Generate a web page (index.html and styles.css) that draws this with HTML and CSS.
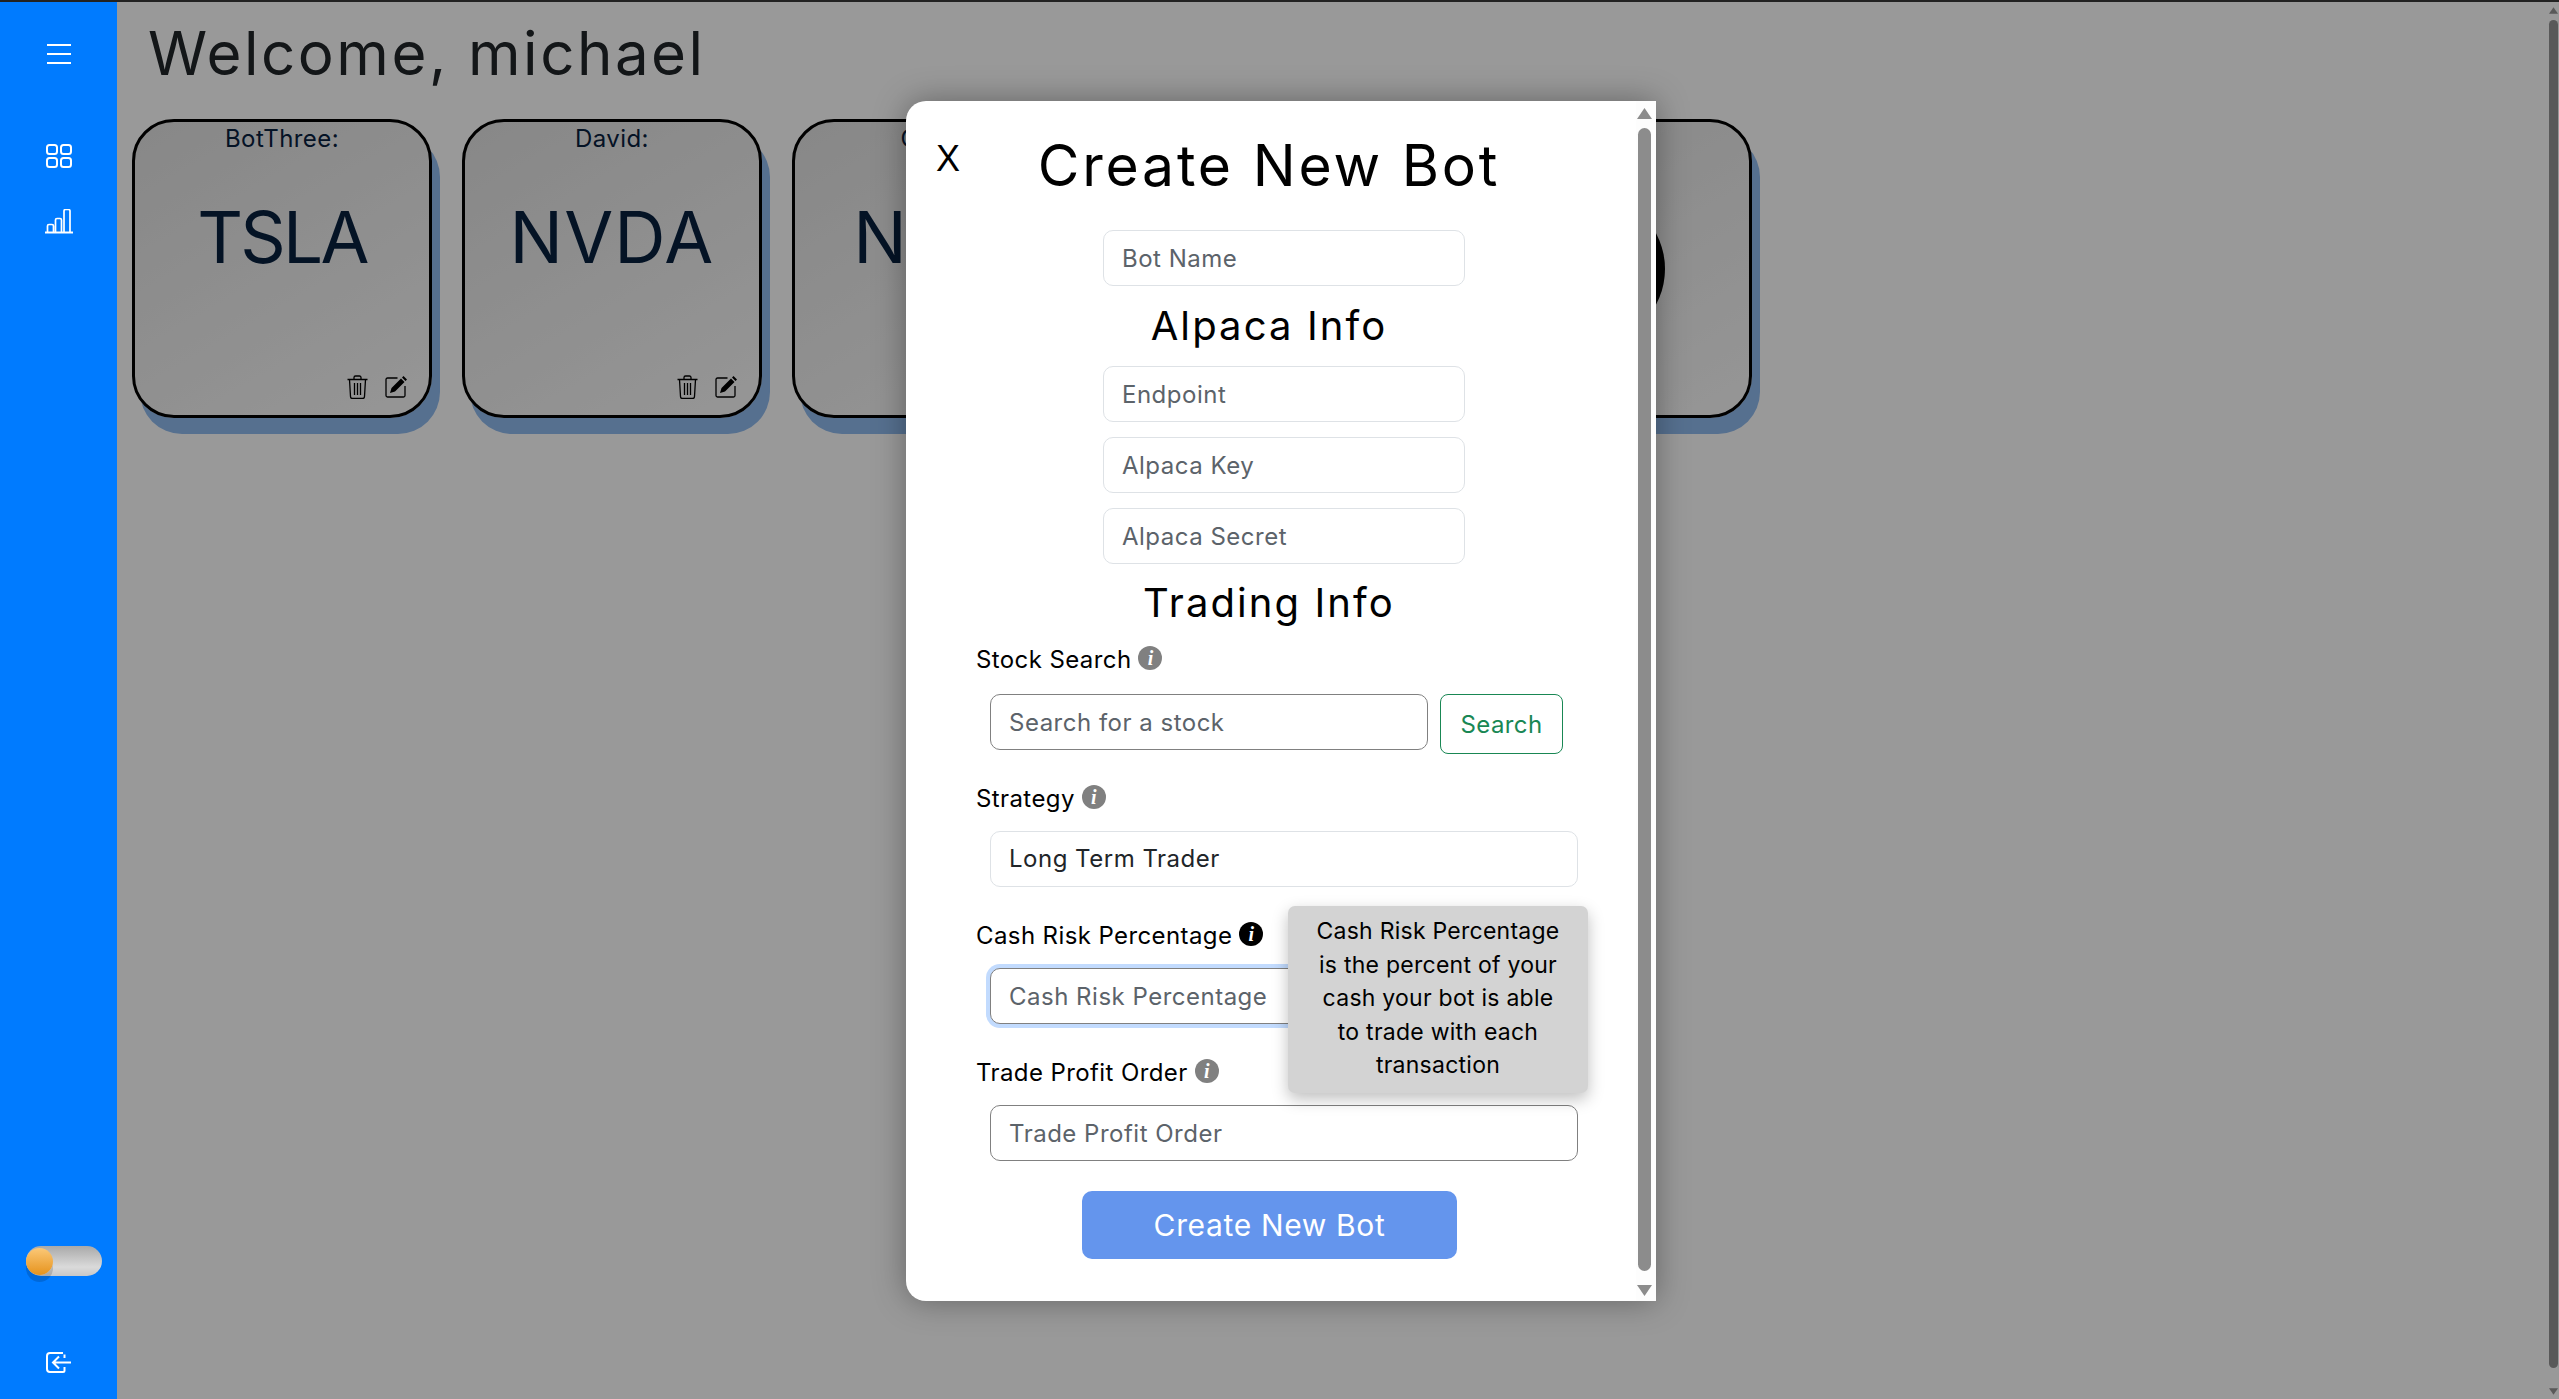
FILE: index.html
```html
<!DOCTYPE html>
<html lang="en">
<head>
<meta charset="utf-8">
<title>Dashboard</title>
<link rel="stylesheet" href="styles.css">
</head>
<body>
<div class="topline"></div>
<div class="app">
  <aside class="sidebar">
    <svg class="ico ico-menu" viewBox="0 0 26 20"><path d="M1 1h24M1 10h24M1 19h24"/></svg>
    <svg class="ico ico-grid" viewBox="0 0 26 24"><rect x="1" y="1" width="10" height="9" rx="2.5"/><rect x="15" y="1" width="10" height="9" rx="2.5"/><rect x="1" y="14" width="10" height="9" rx="2.5"/><rect x="15" y="14" width="10" height="9" rx="2.5"/></svg>
    <svg class="ico ico-chart" viewBox="0 0 28 25"><path d="M0 23.500h28"/><path class="thin" d="M2.500 23.500v-6.500a1.500 1.500 0 0 1 1.500-1.500h3a1.500 1.500 0 0 1 1.500 1.500v6.500M10.500 23.500v-12.500a1.500 1.500 0 0 1 1.500-1.500h3a1.500 1.500 0 0 1 1.500 1.500v12.500M19 23.500v-21.500a1.500 1.500 0 0 1 1.500-1.500h3a1.500 1.500 0 0 1 1.500 1.500v21.500"/></svg>
    <div class="spacer"></div>
    <div class="toggle"><span class="knob"></span></div>
    <svg class="ico ico-exit" viewBox="0 0 26 21"><path d="M17 1H4a3 3 0 0 0-3 3v13a3 3 0 0 0 3 3h13a1.500 1.500 0 0 0 1.500-1.500V15M18.500 6V2.500M25 10.500H7M13 4.500l-6 6 6 6"/></svg>
  </aside>
  <main class="main">
    <h1 class="welcome">Welcome, michael</h1>
    <div class="cards">
      <article class="card">
        <div class="card-name">BotThree:</div>
        <div class="card-ticker tight">TSLA</div>
        <div class="card-actions">
          <svg class="act act-trash" viewBox="0 0 21 24"><path d="M0.500 4.500h20M7 4.500V2.500a1.500 1.500 0 0 1 1.500-1.500h4a1.500 1.500 0 0 1 1.500 1.500v2M2.500 4.500l1 17a2 2 0 0 0 2 2h10a2 2 0 0 0 2-2l1-17M7.500 8v12M10.500 8v12M13.500 8v12"/></svg>
          <svg class="act act-edit" viewBox="0 0 22 22"><path class="line" d="M12.500 2H2.500a1.500 1.500 0 0 0-1.500 1.500v16a1.500 1.500 0 0 0 1.500 1.500h16a1.500 1.500 0 0 0 1.500-1.500V10"/><path class="fill" d="M5 17l1.500-5L16 2.500l3.500 3.500L10 15.500zM17 1.500l1.500-1.500 3.500 3.500-1.500 1.500z"/></svg>
        </div>
      </article>
      <article class="card">
        <div class="card-name">David:</div>
        <div class="card-ticker wide">NVDA</div>
        <div class="card-actions">
          <svg class="act act-trash" viewBox="0 0 21 24"><path d="M0.500 4.500h20M7 4.500V2.500a1.500 1.500 0 0 1 1.500-1.500h4a1.500 1.500 0 0 1 1.500 1.500v2M2.500 4.500l1 17a2 2 0 0 0 2 2h10a2 2 0 0 0 2-2l1-17M7.500 8v12M10.500 8v12M13.500 8v12"/></svg>
          <svg class="act act-edit" viewBox="0 0 22 22"><path class="line" d="M12.500 2H2.500a1.500 1.500 0 0 0-1.500 1.500v16a1.500 1.500 0 0 0 1.500 1.500h16a1.500 1.500 0 0 0 1.500-1.500V10"/><path class="fill" d="M5 17l1.500-5L16 2.500l3.500 3.500L10 15.500zM17 1.500l1.500-1.500 3.500 3.500-1.500 1.500z"/></svg>
        </div>
      </article>
      <article class="card">
        <div class="card-name">Carlos:</div>
        <div class="card-ticker">NOW</div>
      </article>
      <article class="card"></article>
      <article class="card"><span class="blob"></span></article>
    </div>
  </main>
</div>

<div class="overlay"></div>
<div class="page-scroll">
  <svg class="arrow" viewBox="0 0 10 7"><path d="M5 0l5 7H0z"/></svg>
  <div class="page-thumb"></div>
  <svg class="arrow" viewBox="0 0 10 7"><path d="M0 0h10L5 7z"/></svg>
</div>

<section class="modal">
  <button class="close">X</button>
  <div class="modal-scroll">
    <svg class="arrow" viewBox="0 0 15 11"><path d="M7.500 0l7.500 11H0z"/></svg>
    <div class="modal-thumb"></div>
    <svg class="arrow" viewBox="0 0 15 11"><path d="M0 0h15L7.500 11z"/></svg>
  </div>
  <div class="modal-body">
    <h2 class="modal-title">Create New Bot</h2>
    <input class="field field-short" placeholder="Bot Name">
    <h3 class="section section-alpaca">Alpaca Info</h3>
    <div class="short-stack">
      <input class="field field-short" placeholder="Endpoint">
      <input class="field field-short" placeholder="Alpaca Key">
      <input class="field field-short" placeholder="Alpaca Secret">
    </div>
    <h3 class="section section-trading">Trading Info</h3>

    <div class="label-row first"><span>Stock Search</span><i class="info">i</i></div>
    <div class="search-row">
      <input class="field field-search strong" placeholder="Search for a stock">
      <button class="search-btn">Search</button>
    </div>

    <div class="label-row strategy"><span>Strategy</span><i class="info">i</i></div>
    <div class="field field-wide value">Long Term Trader</div>

    <div class="label-row"><span>Cash Risk Percentage</span><i class="info active">i</i></div>
    <input class="field field-wide strong focus" placeholder="Cash Risk Percentage">

    <div class="label-row"><span>Trade Profit Order</span><i class="info">i</i></div>
    <input class="field field-wide strong" placeholder="Trade Profit Order">

    <button class="submit">Create New Bot</button>
  </div>
  <div class="tooltip">Cash Risk Percentage is the percent of your cash your bot is able to trade with each transaction</div>
</section>
</body>
</html>
```
FILE: styles.css
```css
* { box-sizing: border-box; }
html { margin: 0; height: 1399px; overflow: hidden; }
body {
  margin: 0;
  height: 1399px;
  overflow: hidden;
  background: #fff;
  font-family: Inter, "Open Sans", sans-serif;
  color: #212529;
  position: relative;
}
.topline { height: 2px; background: #222; position: relative; z-index: 5; }
.app { display: flex; height: 1397px; }

.sidebar {
  width: 117px;
  flex: none;
  background: #007bff;
  display: flex;
  flex-direction: column;
  align-items: flex-start;
  padding: 42px 0 26px 46px;
  position: relative;
  z-index: 3;
}
.ico { display: block; fill: none; stroke: #fff; stroke-width: 2; }
.ico-menu { width: 26px; height: 20px; }
.ico-grid { width: 26px; height: 24px; margin-top: 80px; }
.ico-chart { width: 28px; height: 25px; margin-top: 41px; margin-left: -1px; }
.ico-chart .thin { stroke-width: 1.700; }
.spacer { flex: 1; }
.toggle {
  width: 76px;
  height: 30px;
  margin-left: -20px;
  margin-bottom: 76px;
  border-radius: 15px;
  background: linear-gradient(180deg, #a9a9a9, #dadada 70%, #c8c8c8);
  position: relative;
}
.knob {
  position: absolute;
  left: 0;
  top: 2px;
  width: 27px;
  height: 27px;
  border-radius: 50%;
  background: linear-gradient(180deg, #fbc877, #e6931d);
  box-shadow: 0 7px 0 rgba(0, 0, 0, .15);
}
.ico-exit { width: 26px; height: 21px; }

.main { flex: 1; padding: 18px 0 0 15px; }
.welcome {
  margin: 0 0 0 16px;
  height: 99px;
  font-size: 60px;
  font-weight: 400;
  line-height: 66px;
  letter-spacing: 2.500px;
}
.cards { display: flex; gap: 30px; }
.card {
  width: 300px;
  height: 299px;
  flex: none;
  border: 3px solid #000;
  border-radius: 42px;
  background: linear-gradient(150deg, #e2e2e2, #fafafa);
  box-shadow: 8px 16px 0 #90bbef;
  color: #08203f;
  display: flex;
  flex-direction: column;
  align-items: center;
  position: relative;
}
.card-name { font-size: 24px; line-height: 34px; letter-spacing: .4px; }
.card-ticker { font-size: 71px; line-height: 90px; margin-top: 36px; }
.card-ticker.tight { letter-spacing: -2.800px; }
.card-ticker.wide { letter-spacing: 1.200px; }
.card-actions {
  margin-top: auto;
  align-self: flex-end;
  display: flex;
  align-items: center;
  gap: 17px;
  padding: 0 22px 16px 0;
}
.act { display: block; }
.act-trash { width: 21px; height: 24px; fill: none; stroke: #000; stroke-width: 1.300; }
.act-edit { width: 22px; height: 22px; }
.act-edit .line { fill: none; stroke: #000; stroke-width: 1.300; }
.act-edit .fill { fill: #000; }
.blob {
  position: absolute;
  left: 60px;
  top: 72px;
  width: 150px;
  height: 150px;
  border-radius: 50%;
  background: #000;
}

.overlay { position: absolute; inset: 0; background: rgba(0, 0, 0, .4); z-index: 2; }
.page-scroll {
  position: absolute;
  right: 1px;
  top: 7px;
  bottom: 4px;
  width: 9px;
  z-index: 4;
  display: flex;
  flex-direction: column;
  align-items: center;
}
.page-scroll .arrow { width: 9px; height: 7px; fill: #595959; flex: none; }
.page-thumb { flex: 1; width: 9px; margin: 6px 0 20px; background: #595959; border-radius: 5px; }

.modal {
  position: absolute;
  left: 906px;
  top: 101px;
  width: 750px;
  height: 1200px;
  background: #fff;
  border-radius: 20px 0 0 20px;
  box-shadow: 0 0 32px rgba(0, 0, 0, .35);
  z-index: 6;
}
.close {
  position: absolute;
  left: 30px;
  top: 40px;
  padding: 0;
  border: 0;
  background: none;
  font: 36px/1 "Liberation Sans", sans-serif;
  color: #000;
}
.modal-scroll {
  position: absolute;
  right: 0;
  top: 0;
  bottom: 0;
  width: 20px;
  background: #fdfdfd;
  padding: 7px 0 5px 1px;
  display: flex;
  flex-direction: column;
  align-items: flex-start;
}
.modal-scroll .arrow { width: 15px; height: 11px; fill: #8c8c8c; flex: none; }
.modal-thumb {
  flex: 1;
  width: 13px;
  margin: 9px 0 14px 1px;
  background: #8c8c8c;
  border-radius: 7px;
}
.modal-body { width: 730px; display: flex; flex-direction: column; padding-top: 28px; align-items: flex-start; }
.modal-title {
  width: 726px;
  margin: 0;
  text-align: center;
  font-size: 57px;
  font-weight: 400;
  line-height: 74px;
  letter-spacing: 2.800px;
  color: #000;
  height: 101px;
}
.section {
  width: 726px;
  margin: 0;
  text-align: center;
  font-weight: 400;
  font-size: 40px;
  letter-spacing: 2.100px;
  color: #000;
  line-height: 50px;
}
.section-alpaca { margin: 15px 0 15px; }
.section-trading { margin: 14px 0 14px; }
.short-stack { display: flex; flex-direction: column; gap: 15px; }
.field {
  display: block;
  height: 56px;
  background: #fff;
  border: 1px solid #dee2e6;
  border-radius: 10px;
  padding: 0 18px;
  font: 24px/54px Inter, "Open Sans", sans-serif;
  letter-spacing: .5px;
  color: #212529;
  outline: none;
}
.field::placeholder { color: #5c636a; opacity: 1; }
.field-short { width: 362px; margin-left: 197px; }
.field-search { width: 438px; }
.field-wide { width: 588px; margin-left: 84px; }
.strong { border-color: #808080; }
.focus { box-shadow: 0 0 0 4px #c2dbfe; }
.label-row {
  display: flex;
  align-items: center;
  gap: 7px;
  margin: 31px 0 16px 70px;
  height: 34px;
  font-size: 24px;
  letter-spacing: .4px;
  color: #000;
}
.label-row.first { margin-top: 0; margin-bottom: 18px; }
.label-row.strategy { margin-top: 27px; }
.info {
  width: 24px;
  height: 24px;
  border-radius: 50%;
  background: #808080;
  color: #fff;
  font: italic 700 20px/24px "Liberation Serif", serif;
  letter-spacing: 0;
  text-align: center;
  margin-top: -2px;
}
.info.active { background: #000; }
.search-row { display: flex; align-items: flex-start; gap: 12px; margin-left: 84px; }
.search-row .field { margin: 0; }
.search-btn {
  width: 123px;
  height: 60px;
  border: 1px solid #198754;
  border-radius: 8px;
  background: #fff;
  color: #198754;
  font: 24px Inter, "Open Sans", sans-serif;
  letter-spacing: .4px;
}
.submit {
  width: 375px;
  height: 68px;
  margin: 30px 0 0 176px;
  border: 0;
  border-radius: 10px;
  background: #6495ed;
  color: #fff;
  font: 30px Inter, "Open Sans", sans-serif;
  letter-spacing: .65px;
}
.tooltip {
  position: absolute;
  left: 382px;
  top: 805px;
  width: 300px;
  height: 187px;
  padding: 9px 22px;
  border-radius: 7px;
  background: #d3d3d3;
  box-shadow: 0 6px 16px rgba(0, 0, 0, .25);
  font-size: 23px;
  letter-spacing: .25px;
  line-height: 33.600px;
  text-align: center;
  color: #000;
}
```
